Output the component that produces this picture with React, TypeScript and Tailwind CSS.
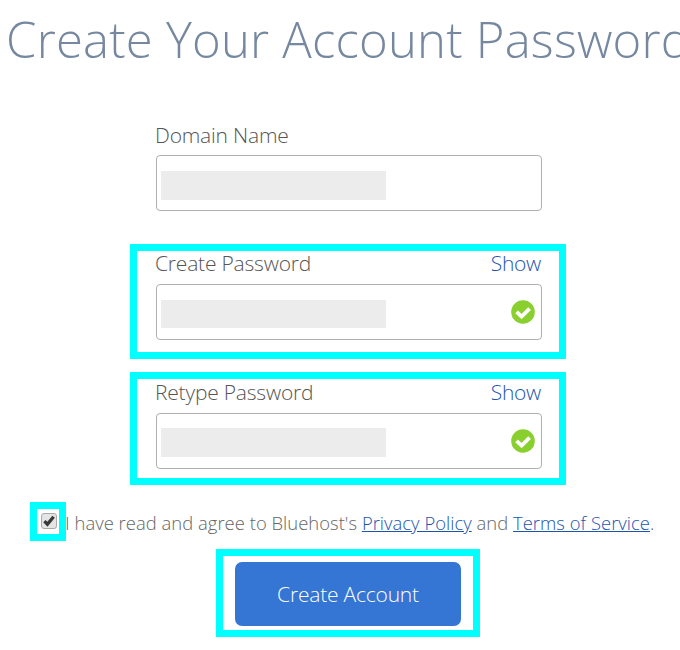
import React from 'react';

interface FieldProps {
    label: string;
    className: string;
    labelClass: string;
    maskClass: string;
    badgeClass?: string;
    secret?: boolean;
}

const CheckBadge: React.FC = () => (
    <svg viewBox="0 0 24 24" className="w-6 h-6 shrink-0">
        <circle cx="12" cy="12" r="11.8" fill="#89d02f" />
        <path d="M5.6 11.8 L10.6 16.6 L18.6 8.6" fill="none" stroke="#fff" strokeWidth="3.8" />
    </svg>
);

const Field: React.FC<FieldProps> = ({ label, className, labelClass, maskClass, badgeClass, secret }) => (
    <div className={`w-[436px] border-[7px] pl-[19px] pr-[17px] ${className}`}>
        <div className={`flex justify-between text-[21px] font-light ${labelClass}`}>
            <label className="text-[#555] tracking-[-0.2px] -ml-px">{label}</label>
            {secret && <a className="text-[#1c55b0] tracking-[-0.3px] mr-px">Show</a>}
        </div>
        <div className="flex items-start justify-between h-14 border-[1.5px] border-[#b0b0b2] rounded-[4px] pl-1 pr-[6px]">
            <div className={`w-[225px] bg-[#ececec] ${maskClass}`} />
            {secret && <div className={badgeClass}><CheckBadge /></div>}
        </div>
    </div>
);

const App: React.FC = () => {
    return (
        <div className="w-[680px] h-[650px] bg-white overflow-hidden font-['Open_Sans',sans-serif]">
            <h1 className="h-20 pl-[6px] text-[49px] leading-[78px] tracking-[0.22px] font-light text-[#75889f] whitespace-nowrap">
                Create Your Account Password
            </h1>

            <div className="flex flex-col pl-[130px] pt-[35px]">
                <Field label="Domain Name" className="h-[116px] border-transparent" labelClass="h-[33px] leading-[27px]" maskClass="h-[29px] mt-[15px]" />
                <Field label="Create Password" className="h-[115px] mt-[13px] border-[#00ffff]" labelClass="h-[33px] leading-[25px]" maskClass="h-7 mt-[15px]" badgeClass="mt-[15px]" secret />
                <Field label="Retype Password" className="h-[113px] mt-[13px] border-[#00ffff]" labelClass="h-[34px] leading-[27px]" maskClass="h-[29px] mt-[14px]" badgeClass="mt-[15px]" secret />
            </div>

            {/* Terms row */}
            <div className="flex h-[39px] mt-[17px] pl-[30px]">
                <div className="w-9 border-[7px] border-[#00ffff] pl-1 pt-1 shrink-0">
                    <div className="w-4 h-4 rounded-[3px] border border-[#a9a9a9] bg-[#e4e4e4]">
                        <svg viewBox="0 0 14 14" className="w-[14px] h-[14px]">
                            <path d="M2.4 7.2 L5.4 10.2 L11.6 2.8" fill="none" stroke="#383838" strokeWidth="3.3" />
                        </svg>
                    </div>
                </div>
                <p className="-ml-px text-[18.4px] leading-[42px] tracking-[0.04px] font-light text-[#666] whitespace-nowrap">
                    I have read and agree to Bluehost&apos;s{' '}
                    <a className="text-[#1c55b0] underline">Privacy Policy</a> and{' '}
                    <a className="text-[#1c55b0] underline">Terms of Service</a>.
                </p>
            </div>

            <div className="w-[264px] h-[88px] mt-2 ml-[216px] border-[7px] border-[#00ffff] px-3 pt-[6px]">
                <button className="block w-[226px] h-16 rounded-[7px] bg-[#3575d3] text-white text-[21px] font-light tracking-[-0.2px] pt-px">
                    Create Account
                </button>
            </div>
        </div>
    );
};

export default App;
